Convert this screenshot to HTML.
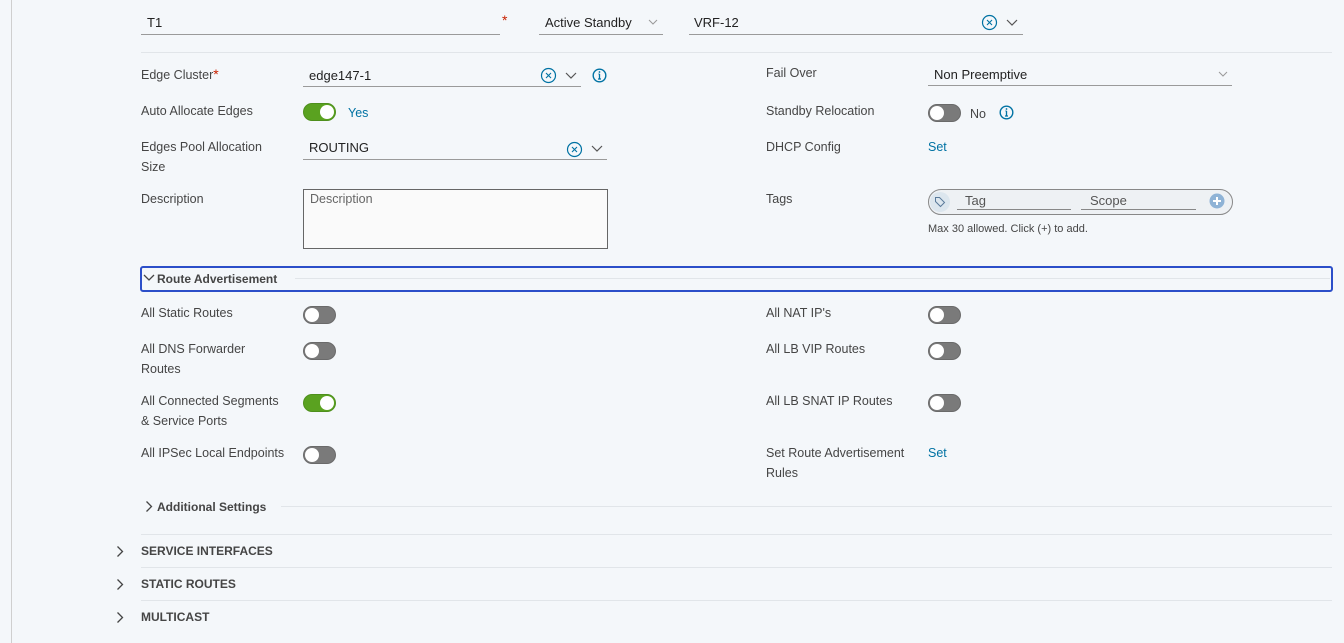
<!DOCTYPE html>
<html><head><meta charset="utf-8"><style>
*{margin:0;padding:0;box-sizing:border-box}
body{width:1344px;height:643px;background:#f4f7fa;position:relative;overflow:hidden;font-family:"Liberation Sans",sans-serif;font-size:12.5px;color:#454545}
.a{position:absolute;white-space:nowrap;line-height:16px;transform:translateY(1px)}
.v{color:#222;font-size:13px}
.l{position:absolute;height:1px;background:#9a9a9a}
.h{position:absolute;height:1px;background:#e1e5e9}
.t{position:absolute;width:33px;height:18px;border-radius:9px;background:#7a7a7a;border:1px solid #6a6a6a}
.t::after{content:"";position:absolute;left:1px;top:1px;width:14px;height:14px;border-radius:50%;background:#fff}
.t.on{background:#5aa220;border-color:#4e8f1c}
.t.on::after{left:16px}
.b{font-weight:bold;color:#454545;font-size:12px}
.blue{color:#0072a3}
.r{color:#c92100}
svg{position:absolute}
</style></head><body>
<div style="position:absolute;left:11px;top:0;width:1px;height:643px;background:#cfcfcf"></div>

<div class="a v" style="left:147px;top:14px">T1</div>
<div class="l" style="left:141px;top:34px;width:359px"></div>
<div class="a r" style="left:502px;top:11px;font-size:14px">*</div>
<div class="a v" style="left:545px;top:14px">Active Standby</div>
<svg style="left:648px;top:19px" width="10" height="6"><path d="M1 1l4 4 4-4" fill="none" stroke="#999" stroke-width="1"/></svg>
<div class="l" style="left:539px;top:34px;width:124px"></div>
<div class="a v" style="left:694px;top:14px">VRF-12</div>
<svg style="left:981px;top:14px" width="17" height="17"><circle cx="8.5" cy="8.5" r="7" fill="none" stroke="#0072a3" stroke-width="1.2"/><path d="M6 6l5 5M11 6l-5 5" stroke="#0072a3" stroke-width="1.1"/></svg>
<svg style="left:1006px;top:19px" width="12" height="7"><path d="M1 1l5 5 5-5" fill="none" stroke="#555" stroke-width="1.2"/></svg>
<div class="l" style="left:689px;top:34px;width:334px"></div>
<div class="h" style="left:141px;top:52px;width:1191px"></div>

<div class="a" style="left:141px;top:65px">Edge Cluster<span class="r" style="font-size:14px">*</span></div>
<div class="a v" style="left:309px;top:67px">edge147-1</div>
<svg style="left:540px;top:67px" width="17" height="17"><circle cx="8.5" cy="8.5" r="7" fill="none" stroke="#0072a3" stroke-width="1.2"/><path d="M6 6l5 5M11 6l-5 5" stroke="#0072a3" stroke-width="1.1"/></svg>
<svg style="left:565px;top:72px" width="12" height="7"><path d="M1 1l5 5 5-5" fill="none" stroke="#555" stroke-width="1.2"/></svg>
<div class="l" style="left:303px;top:86px;width:278px"></div>
<svg style="left:592px;top:68px" width="15" height="15"><circle cx="7.5" cy="7.5" r="6.3" fill="none" stroke="#0072a3" stroke-width="1.4"/><path d="M7.5 6v5M6 11h3M6.5 6h1" stroke="#0072a3" stroke-width="1.3"/><circle cx="7.5" cy="4" r="0.9" fill="#0072a3"/></svg>

<div class="a" style="left:141px;top:102px">Auto Allocate Edges</div>
<div class="t on" style="left:303px;top:103px"></div>
<div class="a blue" style="left:348px;top:104px">Yes</div>

<div class="a" style="left:141px;top:138px">Edges Pool Allocation</div>
<div class="a" style="left:141px;top:158px">Size</div>
<div class="a v" style="left:309px;top:139px">ROUTING</div>
<svg style="left:566px;top:141px" width="17" height="17"><circle cx="8.5" cy="8.5" r="7" fill="none" stroke="#0072a3" stroke-width="1.2"/><path d="M6 6l5 5M11 6l-5 5" stroke="#0072a3" stroke-width="1.1"/></svg>
<svg style="left:591px;top:145px" width="12" height="7"><path d="M1 1l5 5 5-5" fill="none" stroke="#555" stroke-width="1.2"/></svg>
<div class="l" style="left:303px;top:159px;width:304px"></div>

<div class="a" style="left:141px;top:190px">Description</div>
<div style="position:absolute;left:303px;top:189px;width:305px;height:60px;border:1px solid #666;background:#fafafa"></div>
<div class="a" style="left:310px;top:190px;color:#666">Description</div>

<div class="a" style="left:766px;top:64px">Fail Over</div>
<div class="a v" style="left:934px;top:66px">Non Preemptive</div>
<svg style="left:1218px;top:71px" width="10" height="6"><path d="M1 1l4 4 4-4" fill="none" stroke="#999" stroke-width="1"/></svg>
<div class="l" style="left:928px;top:85px;width:304px"></div>

<div class="a" style="left:766px;top:102px">Standby Relocation</div>
<div class="t" style="left:928px;top:104px"></div>
<div class="a" style="left:970px;top:105px">No</div>
<svg style="left:999px;top:105px" width="15" height="15"><circle cx="7.5" cy="7.5" r="6.3" fill="none" stroke="#0072a3" stroke-width="1.4"/><path d="M7.5 6v5M6 11h3M6.5 6h1" stroke="#0072a3" stroke-width="1.3"/><circle cx="7.5" cy="4" r="0.9" fill="#0072a3"/></svg>

<div class="a" style="left:766px;top:138px">DHCP Config</div>
<div class="a blue" style="left:928px;top:138px">Set</div>

<div class="a" style="left:766px;top:190px">Tags</div>
<div style="position:absolute;left:928px;top:189px;width:305px;height:26px;border:1px solid #888;border-radius:13px;background:#eef1f4"></div>
<div style="position:absolute;left:930px;top:192px;width:20px;height:20px;border-radius:50%;background:#dce6ee"></div>
<svg style="left:934px;top:196px" width="12" height="12"><path d="M1.5 1.5h4l5 5-4 4-5-5z" fill="none" stroke="#5a7a9a" stroke-width="1"/></svg>
<div class="a" style="left:965px;top:192px;color:#555;font-size:13px">Tag</div>
<div class="l" style="left:957px;top:209px;width:114px;background:#888"></div>
<div class="a" style="left:1090px;top:192px;color:#555;font-size:13px">Scope</div>
<div class="l" style="left:1081px;top:209px;width:115px;background:#888"></div>
<svg style="left:1209px;top:193px" width="16" height="16"><circle cx="8" cy="8" r="7.5" fill="#8fb3d6"/><path d="M8 4v8M4 8h8" stroke="#fff" stroke-width="2"/></svg>
<div class="a" style="left:928px;top:220px;font-size:11px;color:#454545">Max 30 allowed. Click (+) to add.</div>

<div style="position:absolute;left:140px;top:266px;width:1193px;height:26px;border:2px solid #2c4fc9;border-radius:3px"></div>
<div class="h" style="left:295px;top:278px;width:1035px"></div>
<svg style="left:143px;top:274px" width="12" height="8"><path d="M1 1l5 5 5-5" fill="none" stroke="#454545" stroke-width="1.3"/></svg>
<div class="a b" style="left:157px;top:270px">Route Advertisement</div>

<div class="a" style="left:141px;top:304px">All Static Routes</div>
<div class="t" style="left:303px;top:306px"></div>
<div class="a" style="left:141px;top:340px">All DNS Forwarder</div>
<div class="a" style="left:141px;top:360px">Routes</div>
<div class="t" style="left:303px;top:342px"></div>
<div class="a" style="left:141px;top:392px">All Connected Segments</div>
<div class="a" style="left:141px;top:412px">&amp; Service Ports</div>
<div class="t on" style="left:303px;top:394px"></div>
<div class="a" style="left:141px;top:444px">All IPSec Local Endpoints</div>
<div class="t" style="left:303px;top:446px"></div>

<div class="a" style="left:766px;top:304px">All NAT IP's</div>
<div class="t" style="left:928px;top:306px"></div>
<div class="a" style="left:766px;top:340px">All LB VIP Routes</div>
<div class="t" style="left:928px;top:342px"></div>
<div class="a" style="left:766px;top:392px">All LB SNAT IP Routes</div>
<div class="t" style="left:928px;top:394px"></div>
<div class="a" style="left:766px;top:444px">Set Route Advertisement</div>
<div class="a" style="left:766px;top:464px">Rules</div>
<div class="a blue" style="left:928px;top:444px">Set</div>

<svg style="left:145px;top:500px" width="8" height="13"><path d="M1.5 1.5l5 5-5 5" fill="none" stroke="#454545" stroke-width="1.3"/></svg>
<div class="a b" style="left:157px;top:498px">Additional Settings</div>
<div class="h" style="left:281px;top:506px;width:1051px"></div>

<div class="h" style="left:141px;top:534px;width:1191px"></div>
<div class="h" style="left:141px;top:567px;width:1191px"></div>
<div class="h" style="left:141px;top:600px;width:1191px"></div>
<svg style="left:116px;top:545px" width="8" height="13"><path d="M1.5 1.5l5 5-5 5" fill="none" stroke="#454545" stroke-width="1.3"/></svg>
<div class="a b" style="left:141px;top:542px">SERVICE INTERFACES</div>
<svg style="left:116px;top:578px" width="8" height="13"><path d="M1.5 1.5l5 5-5 5" fill="none" stroke="#454545" stroke-width="1.3"/></svg>
<div class="a b" style="left:141px;top:575px">STATIC ROUTES</div>
<svg style="left:116px;top:611px" width="8" height="13"><path d="M1.5 1.5l5 5-5 5" fill="none" stroke="#454545" stroke-width="1.3"/></svg>
<div class="a b" style="left:141px;top:608px">MULTICAST</div>
</body></html>
